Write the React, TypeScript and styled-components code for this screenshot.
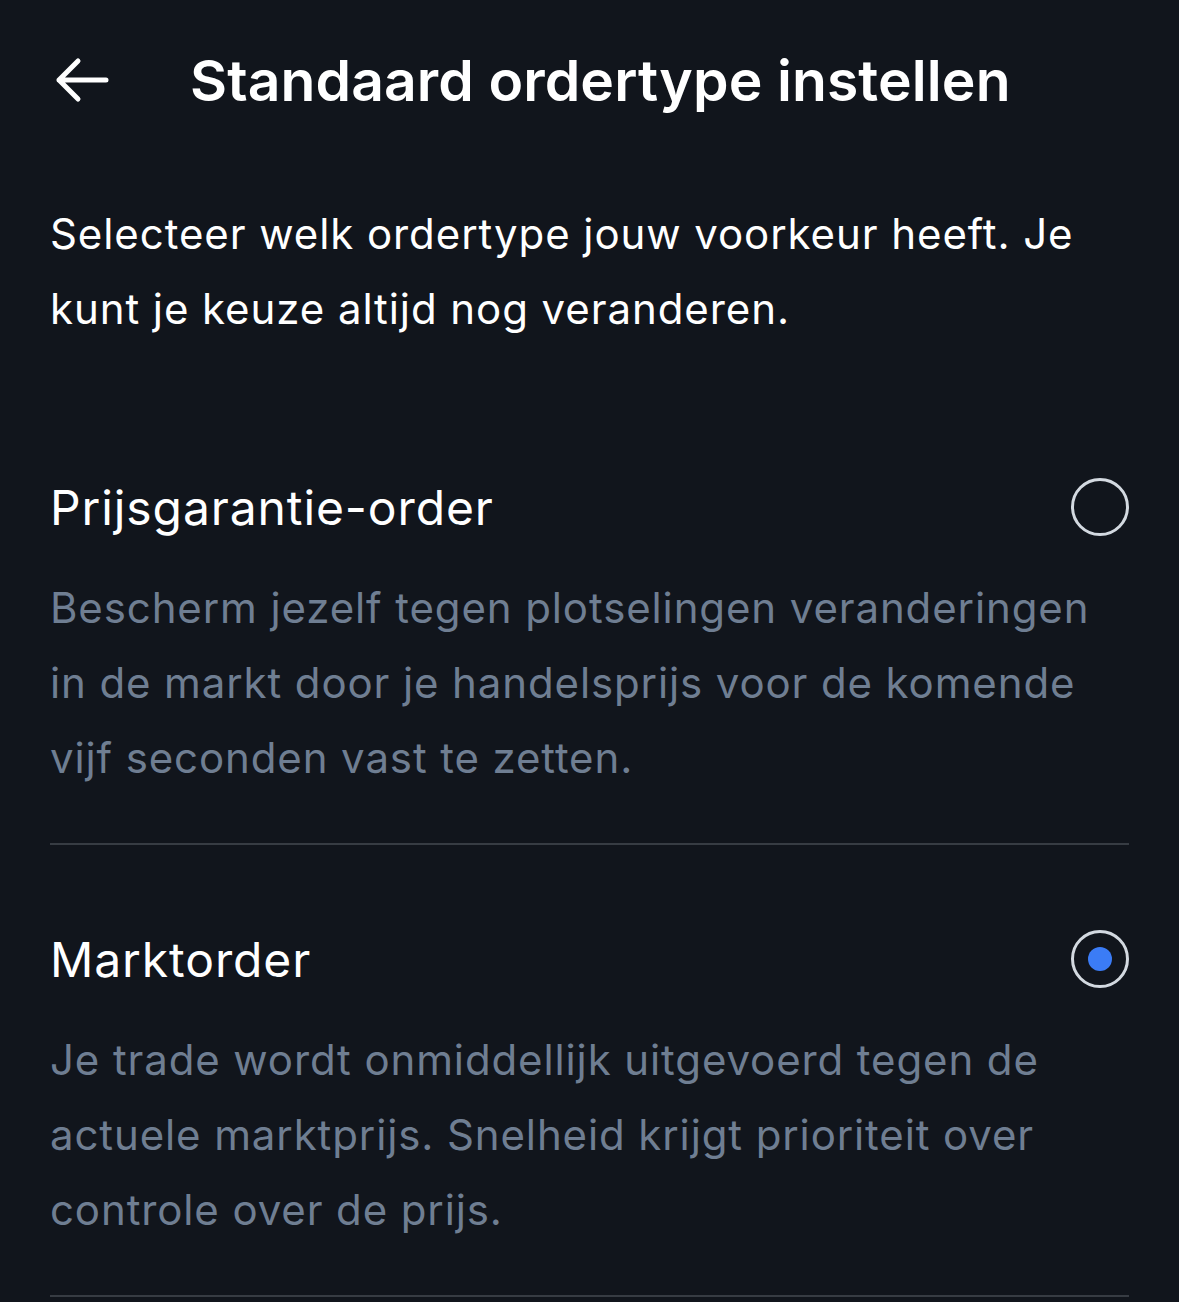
import { useState } from "react";
import styled, { createGlobalStyle } from "styled-components";

const GlobalStyle = createGlobalStyle`
  html, body {
    margin: 0;
    padding: 0;
    background: #11151c;
  }
  body {
    font-family: Inter, "Noto Sans", "Liberation Sans", sans-serif;
    -webkit-font-smoothing: antialiased;
  }
`;

type Opcion = {
  id: string;
  titulo: string;
  descripcion: string;
};

const opciones: Opcion[] = [
  {
    id: "prijsgarantie",
    titulo: "Prijsgarantie-order",
    descripcion:
      "Bescherm jezelf tegen plotselingen veranderingen in de markt door je handelsprijs voor de komende vijf seconden vast te zetten.",
  },
  {
    id: "markt",
    titulo: "Marktorder",
    descripcion:
      "Je trade wordt onmiddellijk uitgevoerd tegen de actuele marktprijs. Snelheid krijgt prioriteit over controle over de prijs.",
  },
];

const App = () => {
  const [seleccion, setSeleccion] = useState<string>("markt");

  return (
    <>
      <GlobalStyle />
      <Pagina>
        <Cabecera>
          <BotonAtras aria-label="Terug">
            <svg width="56" height="48" viewBox="0 0 56 48" fill="none">
              <path
                d="M4 24H51M4 24L23 5M4 24L23 43"
                stroke="#ffffff"
                strokeWidth="5"
                strokeLinecap="round"
                strokeLinejoin="round"
              />
            </svg>
          </BotonAtras>
          <Titulo>Standaard ordertype instellen</Titulo>
        </Cabecera>

        <Intro>
          Selecteer welk ordertype jouw voorkeur heeft. Je kunt je keuze altijd
          nog veranderen.
        </Intro>

        <Lista>
          {opciones.map((opcion) => (
            <Bloque key={opcion.id} onClick={() => setSeleccion(opcion.id)}>
              <FilaTitulo>
                <TituloOpcion>{opcion.titulo}</TituloOpcion>
                <Radio $activo={seleccion === opcion.id} />
              </FilaTitulo>
              <Descripcion>{opcion.descripcion}</Descripcion>
            </Bloque>
          ))}
        </Lista>
      </Pagina>
    </>
  );
};

export default App;

const Pagina = styled.div`
  width: 1179px;
  min-height: 1302px;
  background: #11151c;
  padding: 0 50px;
  box-sizing: border-box;
  color: #ffffff;
`;

const Cabecera = styled.div`
  height: 160px;
  display: flex;
  align-items: center;
  box-sizing: border-box;
`;

const BotonAtras = styled.button`
  background: none;
  border: none;
  padding: 0;
  margin-left: 5px;
  width: 135px;
  display: flex;
  align-items: center;
  cursor: pointer;
`;

const Titulo = styled.h1`
  margin: 0;
  font-size: 57px;
  font-weight: 600;
  letter-spacing: 0.1px;
  color: #ffffff;
`;

const Intro = styled.p`
  margin: 36px 0 0;
  font-size: 42px;
  line-height: 75px;
  font-weight: 400;
  letter-spacing: 0.92px;
  color: #ffffff;
`;

const Lista = styled.div`
  margin-top: 47px;
  display: flex;
  flex-direction: column;
`;

const Bloque = styled.div`
  padding: 74px 0 48px;
  border-bottom: 2px solid #373c43;
  cursor: pointer;
`;

const FilaTitulo = styled.div`
  height: 80px;
  display: flex;
  align-items: center;
  justify-content: space-between;
`;

const TituloOpcion = styled.div`
  font-size: 48px;
  font-weight: 400;
  letter-spacing: 0.9px;
  color: #ffffff;
`;

const Radio = styled.div<{ $activo: boolean }>`
  width: 58px;
  height: 58px;
  border-radius: 50%;
  border: 3px solid #d3d9e0;
  box-sizing: border-box;
  display: flex;
  align-items: center;
  justify-content: center;

  &::after {
    content: "";
    width: 24px;
    height: 24px;
    border-radius: 50%;
    background: #3b7cf6;
    display: ${(p) => (p.$activo ? "block" : "none")};
  }
`;

const Descripcion = styled.p`
  margin: 23px 0 0;
  font-size: 42px;
  line-height: 75px;
  letter-spacing: 0.88px;
  color: #6f7e92;
`;
